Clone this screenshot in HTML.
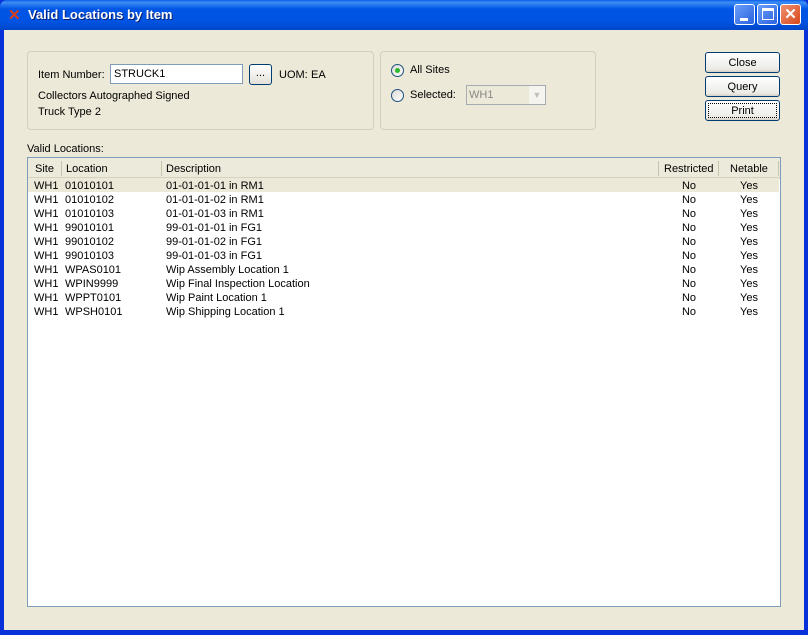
<!DOCTYPE html>
<html><head><style>
*{margin:0;padding:0;box-sizing:border-box}
body{width:808px;height:635px;overflow:hidden;font-family:"Liberation Sans",sans-serif;font-size:11px;color:#000;background:#0831d9;position:relative}
.abs{position:absolute}
#title{left:0;top:0;width:808px;height:30px;background:linear-gradient(#0a5fe8 0%,#3d8df5 8%,#0055e5 30%,#0054e3 70%,#0046c8 100%);border-radius:7px 7px 0 0}
#title .t{left:28px;top:7px;color:#fff;font-weight:bold;font-size:13px;text-shadow:1px 1px #0a1e6e}
#body{left:4px;top:30px;width:800px;height:600px;background:#ece9d8}
.grp{border:1px solid #d0d0bf;border-radius:4px}
.tb{width:21px;height:21px;border:1px solid #fff;border-radius:3px;top:4px;background:linear-gradient(135deg,#6a9ef8,#2a63e0);}
.btn{left:705px;width:75px;height:21px;border:1px solid #003c74;border-radius:3px;background:linear-gradient(#fff,#ecebe6 85%,#d6d0c5);text-align:center;line-height:20px}
.radio{width:13px;height:13px;border:1px solid #1c5180;border-radius:50%;background:linear-gradient(135deg,#dcdbd5,#fff)}
table{border-collapse:collapse;width:751px;table-layout:fixed;position:relative;top:-1px}
td{height:14px;line-height:14px;white-space:nowrap;padding:0}
td span{position:relative;top:1px}
</style></head><body>
<div id="title" class="abs">
 <div class="abs" style="left:8px;top:6px;color:#d8401a;font-weight:bold;font-size:15px">✕</div>
 <div class="t abs">Valid Locations by Item</div>
 <div class="tb abs" style="left:734px"><div class="abs" style="left:5px;top:13px;width:8px;height:3px;background:#fff"></div></div>
 <div class="tb abs" style="left:757px"><div class="abs" style="left:4px;top:3px;width:12px;height:12px;border:1px solid #fff;border-top-width:3px"></div></div>
 <div class="tb abs" style="left:780px;background:linear-gradient(135deg,#f09070,#d8481c);color:#fff;font-weight:bold;font-size:15px;text-align:center;line-height:19px">✕</div>
</div>
<div id="body" class="abs"></div>
<div class="grp abs" style="left:27px;top:51px;width:347px;height:79px"></div>
<div class="abs" style="left:38px;top:69px">Item Number:</div>
<div class="abs" style="left:110px;top:64px;width:133px;height:20px;border:1px solid #7f9db9;background:#fff;padding:3px 3px">STRUCK1</div>
<div class="abs" style="left:249px;top:64px;width:23px;height:21px;border:1px solid #003c74;border-radius:3px;background:linear-gradient(#fff,#e3e1d8);text-align:center;line-height:17px">...</div>
<div class="abs" style="left:279px;top:69px">UOM:</div>
<div class="abs" style="left:311px;top:69px">EA</div>
<div class="abs" style="left:38px;top:90px">Collectors Autographed Signed</div>
<div class="abs" style="left:38px;top:106px">Truck Type 2</div>
<div class="grp abs" style="left:380px;top:51px;width:216px;height:79px"></div>
<div class="radio abs" style="left:391px;top:64px"><div class="abs" style="left:3px;top:3px;width:5px;height:5px;border-radius:50%;background:#2eb82e"></div></div>
<div class="abs" style="left:410px;top:64px">All Sites</div>
<div class="radio abs" style="left:391px;top:89px"></div>
<div class="abs" style="left:410px;top:89px">Selected:</div>
<div class="abs" style="left:466px;top:85px;width:80px;height:20px;border:1px solid #a5acb2;background:#ece9d8;color:#888;padding:3px 2px">WH1</div>
<div class="abs" style="left:529px;top:86px;width:16px;height:18px;background:#f5f4ef;color:#c0c0b8;text-align:center;font-size:9px;line-height:18px">▼</div>
<div class="btn abs" style="top:52px">Close</div>
<div class="btn abs" style="top:76px">Query</div>
<div class="btn abs" style="top:100px;outline:1px dotted #000;outline-offset:-4px">Print</div>
<div class="abs" style="left:27px;top:143px">Valid Locations:</div>
<div class="abs" style="left:27px;top:157px;width:754px;height:450px;border:1px solid #7f9db9;background:#fff">
 <div style="height:21px;background:#ebeadb;border-bottom:2px solid #d6d2c2;position:relative">
  <div class="abs" style="left:7px;top:5px">Site</div>
  <div class="abs" style="left:33px;top:3px;width:1px;height:15px;background:#c7c5b2"></div>
  <div class="abs" style="left:38px;top:5px">Location</div>
  <div class="abs" style="left:133px;top:3px;width:1px;height:15px;background:#c7c5b2"></div>
  <div class="abs" style="left:138px;top:5px">Description</div>
  <div class="abs" style="left:630px;top:3px;width:1px;height:15px;background:#c7c5b2"></div>
  <div class="abs" style="left:636px;top:5px">Restricted</div>
  <div class="abs" style="left:690px;top:3px;width:1px;height:15px;background:#c7c5b2"></div>
  <div class="abs" style="left:702px;top:5px">Netable</div>
  <div class="abs" style="left:750px;top:3px;width:1px;height:15px;background:#c7c5b2"></div>
 </div>
 <table>
 <colgroup><col style="width:33px"><col style="width:101px"><col style="width:497px"><col style="width:60px"><col style="width:60px"></colgroup>
 <tr style="background:#ece9d8"><td style="padding-left:6px"><span>WH1</span></td><td style="padding-left:4px"><span>01010101</span></td><td style="padding-left:4px"><span>01-01-01-01 in RM1</span></td><td style="text-align:center"><span>No</span></td><td style="text-align:center"><span>Yes</span></td></tr>
 <tr><td style="padding-left:6px"><span>WH1</span></td><td style="padding-left:4px"><span>01010102</span></td><td style="padding-left:4px"><span>01-01-01-02 in RM1</span></td><td style="text-align:center"><span>No</span></td><td style="text-align:center"><span>Yes</span></td></tr>
 <tr><td style="padding-left:6px"><span>WH1</span></td><td style="padding-left:4px"><span>01010103</span></td><td style="padding-left:4px"><span>01-01-01-03 in RM1</span></td><td style="text-align:center"><span>No</span></td><td style="text-align:center"><span>Yes</span></td></tr>
 <tr><td style="padding-left:6px"><span>WH1</span></td><td style="padding-left:4px"><span>99010101</span></td><td style="padding-left:4px"><span>99-01-01-01 in FG1</span></td><td style="text-align:center"><span>No</span></td><td style="text-align:center"><span>Yes</span></td></tr>
 <tr><td style="padding-left:6px"><span>WH1</span></td><td style="padding-left:4px"><span>99010102</span></td><td style="padding-left:4px"><span>99-01-01-02 in FG1</span></td><td style="text-align:center"><span>No</span></td><td style="text-align:center"><span>Yes</span></td></tr>
 <tr><td style="padding-left:6px"><span>WH1</span></td><td style="padding-left:4px"><span>99010103</span></td><td style="padding-left:4px"><span>99-01-01-03 in FG1</span></td><td style="text-align:center"><span>No</span></td><td style="text-align:center"><span>Yes</span></td></tr>
 <tr><td style="padding-left:6px"><span>WH1</span></td><td style="padding-left:4px"><span>WPAS0101</span></td><td style="padding-left:4px"><span>Wip Assembly Location 1</span></td><td style="text-align:center"><span>No</span></td><td style="text-align:center"><span>Yes</span></td></tr>
 <tr><td style="padding-left:6px"><span>WH1</span></td><td style="padding-left:4px"><span>WPIN9999</span></td><td style="padding-left:4px"><span>Wip Final Inspection Location</span></td><td style="text-align:center"><span>No</span></td><td style="text-align:center"><span>Yes</span></td></tr>
 <tr><td style="padding-left:6px"><span>WH1</span></td><td style="padding-left:4px"><span>WPPT0101</span></td><td style="padding-left:4px"><span>Wip Paint Location 1</span></td><td style="text-align:center"><span>No</span></td><td style="text-align:center"><span>Yes</span></td></tr>
 <tr><td style="padding-left:6px"><span>WH1</span></td><td style="padding-left:4px"><span>WPSH0101</span></td><td style="padding-left:4px"><span>Wip Shipping Location 1</span></td><td style="text-align:center"><span>No</span></td><td style="text-align:center"><span>Yes</span></td></tr>
 </table>
</div>
</body></html>
